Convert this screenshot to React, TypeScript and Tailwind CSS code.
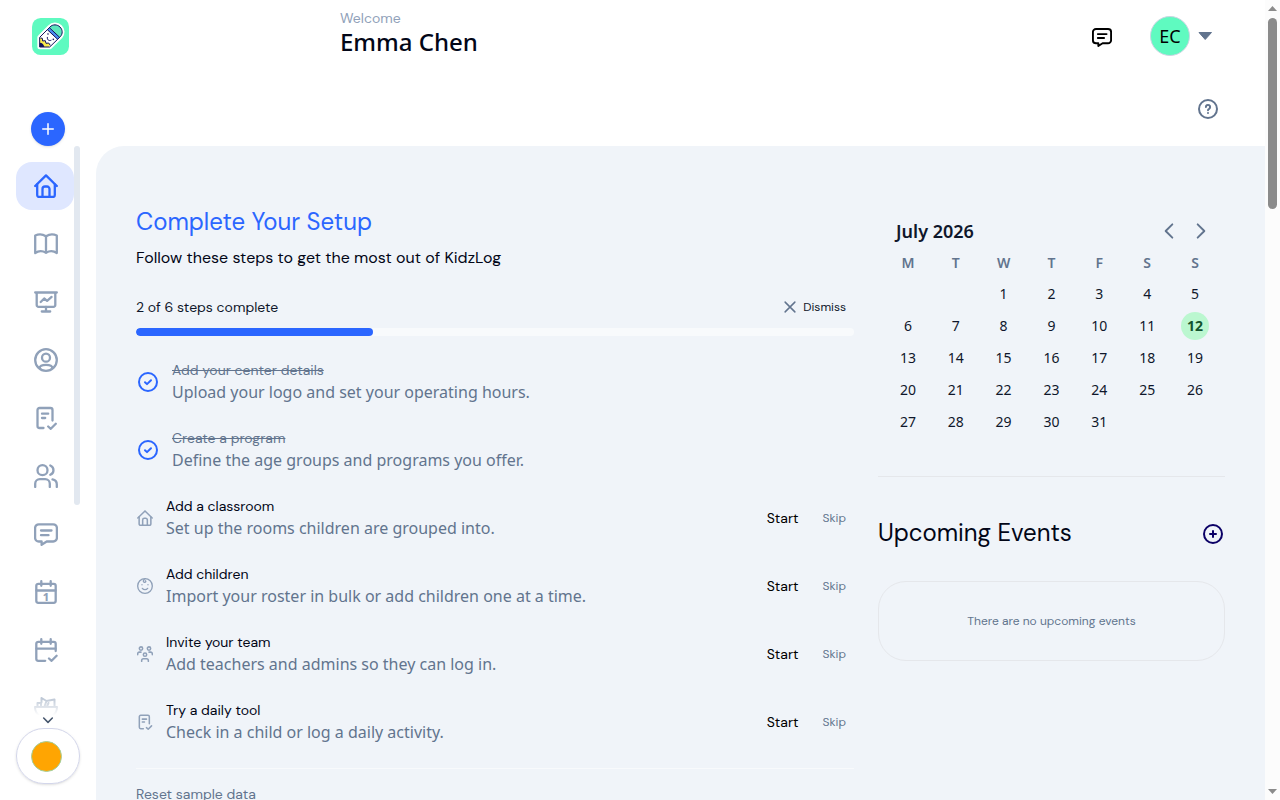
import React, { useState } from 'react';

interface IconProps {
    className?: string;
}

interface Step {
    title: string;
    description: string;
    done: boolean;
    icon: React.ComponentType<IconProps>;
}

const Svg = ({ className, children, strokeWidth = 2.3 }: { className?: string, children: React.ReactNode, strokeWidth?: number }) => (
    <svg viewBox="0 0 24 24" fill="none" stroke="currentColor" strokeWidth={strokeWidth}
        strokeLinecap="round" strokeLinejoin="round" className={className} aria-hidden="true">
        {children}
    </svg>
);

const HomeIcon = ({ className }: IconProps) => (
    <Svg className={className}>
        <path d="M1.2 12 12 1.4 22.8 12" />
        <path d="M3.2 10.500V21a2 2 0 0 0 2 2h13.600a2 2 0 0 0 2-2V10.500" />
        <path d="M8.500 23v-8a2.500 2.500 0 0 1 2.500-2.500h2a2.500 2.500 0 0 1 2.500 2.500V23" />
    </Svg>
);

const BookIcon = ({ className }: IconProps) => (
    <Svg className={className}>
        <path d="M1.2 3.500C4.500 2 8.500 2 12 4.200 15.500 2 19.500 2 22.800 3.500V21C19.500 18.700 15.500 18.700 12 20.700 8.500 18.700 4.500 18.700 1.200 21Z" />
        <path d="M12 4.200V20.500" />
    </Svg>
);

const BoardIcon = ({ className }: IconProps) => (
    <Svg className={className}>
        <path d="M1.200 2.500h21.600M2.700 2.500V15a1.800 1.800 0 0 0 1.800 1.800h15a1.800 1.800 0 0 0 1.800-1.800V2.500" />
        <path d="M12 17v4.500M7.800 21.500h8.400" />
        <path d="m6.700 12 3.500-3.500 2.900 2.400 4.500-4" />
    </Svg>
);

const ProfileIcon = ({ className }: IconProps) => (
    <Svg className={className}>
        <circle cx="12" cy="12" r="10.800" />
        <circle cx="12" cy="9.700" r="4" />
        <path d="M5.800 20c-.4-1.900 1.900-3.200 6.200-3.200s6.600 1.300 6.200 3.200" />
    </Svg>
);

const ChecklistIcon = ({ className }: IconProps) => (
    <Svg className={className}>
        <path d="M9.500 22H5.500a2 2 0 0 1-2-2V4a2 2 0 0 1 2-2h11a2 2 0 0 1 2 2v10.500" />
        <path d="M8 7.700h6.200M8 12h3.200" />
        <path d="m14.200 20.500 2.600 2.300 5-5" />
    </Svg>
);

const UsersIcon = ({ className }: IconProps) => (
    <Svg className={className}>
        <circle cx="8.500" cy="6.200" r="5" />
        <path d="M16.300 1.500a5 5 0 0 1 0 9.300" />
        <path d="M1.200 23v-3.200a4.600 4.600 0 0 1 4.600-4.600h5.400a4.600 4.600 0 0 1 4.600 4.600V23" />
        <path d="M18.500 15.400c2.600.5 4.300 2.400 4.300 5V23" />
    </Svg>
);

const ChatIcon = ({ className }: IconProps) => (
    <Svg className={className}>
        <path d="M4.800 2.300h14.400A3.700 3.700 0 0 1 22.900 6v9.800a3.700 3.700 0 0 1-3.700 3.700h-6.500L7.600 22.800v-3.300H4.800A3.700 3.700 0 0 1 1.100 15.800V6a3.700 3.700 0 0 1 3.700-3.700Z" />
        <path d="M7 8.500h10.500M7 13.200h7.500" />
    </Svg>
);

const CalendarDayIcon = ({ className }: IconProps) => (
    <Svg className={className}>
        <path d="M4.300 3.800h15.400a2 2 0 0 1 2 2v15a2 2 0 0 1-2 2H4.300a2 2 0 0 1-2-2v-15a2 2 0 0 1 2-2Z" />
        <path d="M2.500 10.500h19M7.300 1.200v4.600M16.700 1.200v4.600" />
        <text x="12" y="21" textAnchor="middle" fontSize="11" fontWeight="800" fill="currentColor" stroke="none">1</text>
    </Svg>
);

const CalendarCheckIcon = ({ className }: IconProps) => (
    <Svg className={className}>
        <path d="M11.200 22.800H4.300a2 2 0 0 1-2-2V5.800a2 2 0 0 1 2-2h15.400a2 2 0 0 1 2 2V13" />
        <path d="M2.500 10.700h19M7.300 1.200v4.600M16.700 1.200v4.600" />
        <path d="m15 20.500 2.600 2.300 5-5" />
    </Svg>
);

const MealIcon = ({ className }: IconProps) => (
    <Svg className={className} strokeWidth={2}>
        <path d="M1 11h22c0 4.500-2 7.500-5.500 9.500v2.500h-11v-2.500C3 18.500 1 15.500 1 11Z" />
        <path d="M3.500 10.500V7H7v3.500M7.500 6.500V2l5 3-2 5.500M12.500 5l8-1.500V11M13 10.500l1.500-3.500" />
    </Svg>
);

const ChildIcon = ({ className }: IconProps) => (
    <Svg className={className} strokeWidth={2}>
        <circle cx="12" cy="12" r="11" />
        <path d="M12.500 1c-3 1-4 4.500-1.500 5.500 1.800.6 2.800-1.300 1.500-2.300" />
        <path d="M7.500 10v.1M16.500 10v.1M8 15.500c2 2.500 6 2.500 8 0" />
    </Svg>
);

const TeamIcon = ({ className }: IconProps) => (
    <Svg className={className}>
        <circle cx="6" cy="3.800" r="2.500" />
        <circle cx="18" cy="3.800" r="2.500" />
        <circle cx="12" cy="13" r="2.500" />
        <path d="M1 13v-1.200a2.600 2.600 0 0 1 2.600-2.600H6M23 13v-1.200a2.600 2.600 0 0 0-2.600-2.600H18M7 23v-1.200a2.600 2.600 0 0 1 2.600-2.600h4.800a2.600 2.600 0 0 1 2.600 2.600V23" />
    </Svg>
);

const CheckCircleIcon = ({ className }: IconProps) => (
    <Svg className={className} strokeWidth={2}>
        <circle cx="12" cy="12" r="9" />
        <path d="m9 12.200 2 1.900 4-3.800" />
    </Svg>
);

const HelpIcon = ({ className }: IconProps) => (
    <Svg className={className} strokeWidth={2}>
        <circle cx="12" cy="12" r="9" />
        <path d="M9.900 10a2.100 2.100 0 1 1 3.200 1.800c-.7.400-1.100.8-1.100 1.500M12 16v.1" />
    </Svg>
);

const PlusCircleIcon = ({ className }: IconProps) => (
    <Svg className={className} strokeWidth={2}>
        <circle cx="12" cy="12" r="9" />
        <path d="M12 9v6M9 12h6" />
    </Svg>
);

const Logo = () => (
    <svg viewBox="0 0 111 111" className="size-[37px]" role="img" aria-label="KidzLog">
        <rect width="111" height="111" rx="26" fill="#5ffac0" />
        <path d="M23 87V58L54 27c8-9 22-8 30 0s9 20 1 29L53 87Z" fill="#fff" stroke="#fff" strokeWidth="14" strokeLinejoin="round" />
        <path d="M52 29l2-2c8-9 22-8 30 0s9 20 1 29l-2 2Z" fill="#5ce6bd" />
        <path d="M46 35l6-6 31 29-6 6Z" fill="#4a8cf0" />
        <path d="M23 87V60l8 1 1 8 8-1 2 8 8-1 5 7-5 5Z" fill="#fbe94b" />
        <path d="M23 87V74c8 0 13 6 14 13Z" fill="#12105a" />
        <path d="M23 87V58L54 27c8-9 22-8 30 0s9 20 1 29L53 87ZM46 35l31 29M52 29l31 29M25 60l6 1 1 8 8-1 2 8 8-1 5 7"
            fill="none" stroke="#12105a" strokeWidth="3" strokeLinejoin="round" />
        <path d="M46 58c-1 7 4 12 11 9" fill="none" stroke="#12105a" strokeWidth="3" strokeLinecap="round" />
        <circle cx="48" cy="48" r="2.500" fill="#12105a" />
        <circle cx="64" cy="64" r="2.500" fill="#12105a" />
    </svg>
);

const navItems = [
    { label: 'Home', icon: HomeIcon },
    { label: 'Programs', icon: BookIcon },
    { label: 'Classrooms', icon: BoardIcon },
    { label: 'Children', icon: ProfileIcon },
    { label: 'Activities', icon: ChecklistIcon },
    { label: 'Families', icon: UsersIcon },
    { label: 'Messages', icon: ChatIcon },
    { label: 'Calendar', icon: CalendarDayIcon },
    { label: 'Attendance', icon: CalendarCheckIcon },
    { label: 'Meals', icon: MealIcon },
];

const steps: Step[] = [
    { title: 'Add your center details', description: 'Upload your logo and set your operating hours.', done: true, icon: CheckCircleIcon },
    { title: 'Create a program', description: 'Define the age groups and programs you offer.', done: true, icon: CheckCircleIcon },
    { title: 'Add a classroom', description: 'Set up the rooms children are grouped into.', done: false, icon: HomeIcon },
    { title: 'Add children', description: 'Import your roster in bulk or add children one at a time.', done: false, icon: ChildIcon },
    { title: 'Invite your team', description: 'Add teachers and admins so they can log in.', done: false, icon: TeamIcon },
    { title: 'Try a daily tool', description: 'Check in a child or log a daily activity.', done: false, icon: ChecklistIcon },
];

const weekDays = ['M', 'T', 'W', 'T', 'F', 'S', 'S'];
const TODAY = 12;

// July 2026 starts on a Wednesday
const weeks = Array.from({ length: 5 }, (_, week) =>
    Array.from({ length: 7 }, (_, day) => {
        const date = week * 7 + day - 1;
        return date >= 1 && date <= 31 ? date : null;
    })
);

const Sidebar = () => {
    const [active, setActive] = useState('Home');

    return (
        <aside className="flex w-24 shrink-0 flex-col">
            <a href="#home" className="mt-[18px] ml-8 size-[37px]">
                <Logo />
            </a>
            <button aria-label="Create" className="mx-auto mt-[57px] flex size-[34px] shrink-0 items-center justify-center rounded-full bg-[#2b66ff] text-white shadow-sm">
                <Svg className="size-[18px]" strokeWidth={2}>
                    <path d="M12 5v14M5 12h14" />
                </Svg>
            </button>

            <div className="relative mx-4 flex min-h-0 flex-1 overflow-hidden">
                <nav className="flex flex-1 flex-col gap-2.5 pt-4">
                    {navItems.map(({ label, icon: Icon }) => (
                        <button
                            key={label}
                            aria-label={label}
                            onClick={() => setActive(label)}
                            className={`flex h-12 shrink-0 items-center justify-center rounded-2xl pl-0.5 ${
                                active === label ? 'bg-[#dfe7ff] text-[#2b66ff]' : 'text-slate-400'
                            }`}
                        >
                            <Icon className="size-6" />
                        </button>
                    ))}
                </nav>
                <div className="h-[359px] w-1.5 rounded-full bg-slate-200" />
                <div className="absolute inset-x-0 bottom-0 flex h-9 items-end justify-center bg-linear-to-t from-white from-35% to-white/20">
                    <Svg className="size-4 text-slate-600">
                        <path d="m5.500 9 6.500 6.500L18.500 9" />
                    </Svg>
                </div>
            </div>

            <button aria-label="Account status" className="mx-4 mb-4 flex h-14 shrink-0 items-center rounded-[28px] border border-[#d3d6ea] pl-3.5 shadow-sm">
                <span className="size-[31px] rounded-full border border-[#a5cf9a] bg-[#ffa502]" />
            </button>
        </aside>
    );
};

const Header = () => (
    <header className="flex h-[146px] shrink-0 flex-col pr-10">
        <div className="flex h-[72px] items-center justify-between pl-[244px]">
            <div className="pb-2">
                <p className="font-['DM_Sans','Inter',sans-serif] text-sm text-slate-400">Welcome</p>
                <h1 className="text-2xl leading-7 font-medium text-[#020617]">Emma Chen</h1>
            </div>
            <div className="flex items-center gap-[38px]">
                <button aria-label="Messages" className="pt-0.5 text-black">
                    <ChatIcon className="size-5" />
                </button>
                <button aria-label="Account menu" className="flex items-center gap-2 pr-3">
                    <span className="flex size-10 items-center justify-center rounded-full border border-slate-300 bg-[#5ffac0] text-lg text-black">EC</span>
                    <svg viewBox="0 0 15 8" className="h-2 w-[15px] text-slate-500" aria-hidden="true">
                        <path d="M1 .5h12.500L7.200 7.500Z" fill="currentColor" stroke="currentColor" strokeLinejoin="round" />
                    </svg>
                </button>
            </div>
        </div>
        <div className="flex flex-1 items-center justify-end">
            <button aria-label="Help" className="flex size-[34px] items-center justify-center text-slate-500">
                <HelpIcon className="size-6" />
            </button>
        </div>
    </header>
);

const SetupSteps = () => {
    const completed = steps.filter((step) => step.done).length;

    return (
        <section className="col-span-8 font-['DM_Sans','Inter',sans-serif]">
            <h2 className="text-2xl text-[#2b66ff]">Complete Your Setup</h2>
            <p className="mt-2 text-base text-[#020617]">Follow these steps to get the most out of KidzLog</p>

            <div className="mt-6 flex h-[26px] items-center justify-between pr-2">
                <span className="text-sm text-slate-900">{completed} of {steps.length} steps complete</span>
                <button className="flex items-center gap-1 text-xs text-slate-900">
                    <Svg className="size-[18px] text-slate-500" strokeWidth={2}>
                        <path d="m5.500 5.500 13 13M18.500 5.500l-13 13" />
                    </Svg>
                    Dismiss
                </button>
            </div>
            <div className="mt-2 h-2 overflow-hidden rounded-full bg-slate-50">
                <div className="h-2 rounded-full bg-[#2b66ff]" style={{ width: `${Math.round((completed / steps.length) * 100)}%` }} />
            </div>

            <ul className="mt-3">
                {steps.map(({ title, description, done, icon: Icon }) => (
                    <li key={title} className="flex items-center gap-3 py-3 pr-2">
                        <Icon className={done ? 'size-6 shrink-0 text-[#2b66ff]' : 'mx-px size-4 shrink-0 text-slate-400'} />
                        <div className="flex-1">
                            <p className={`text-sm ${done ? 'text-slate-500 line-through' : 'text-[#020617]'}`}>{title}</p>
                            <p className="font-['Noto_Sans',sans-serif] text-base text-slate-500">{description}</p>
                        </div>
                        {!done && (
                            <div className="flex items-center gap-6">
                                <button className="text-sm text-black">Start</button>
                                <button className="text-xs text-slate-500">Skip</button>
                            </div>
                        )}
                    </li>
                ))}
            </ul>

            <div className="mt-3 border-t border-slate-50 pt-[15px]">
                <button className="block text-sm text-slate-500">Reset sample data</button>
            </div>
        </section>
    );
};

const Calendar = () => (
    <div className="border-b border-gray-200 px-1.5 pt-2 pb-[38px]">
        <div className="flex h-[34px] items-center justify-between pr-0.5 pl-3">
            <h3 className="text-lg leading-8 font-semibold text-slate-900">July 2026</h3>
            <div className="flex text-slate-500">
                <button aria-label="Previous month" className="flex size-8 items-center justify-center">
                    <Svg className="size-5"><path d="m16 4-8 8 8 8" /></Svg>
                </button>
                <button aria-label="Next month" className="flex size-8 items-center justify-center">
                    <Svg className="size-5"><path d="m8 4 8 8-8 8" /></Svg>
                </button>
            </div>
        </div>
        <table className="w-full table-fixed text-center text-sm text-slate-900">
            <thead>
                <tr className="h-[30px] text-slate-500">
                    {weekDays.map((day, i) => (
                        <th key={i} scope="col" className="p-0 font-semibold">{day}</th>
                    ))}
                </tr>
            </thead>
            <tbody>
                {weeks.map((week, i) => (
                    <tr key={i} className="h-8">
                        {week.map((date, j) => (
                            <td key={j} className="p-0">
                                {date && (
                                    <span className={`mx-auto flex size-7 items-center justify-center rounded-full ${
                                        date === TODAY ? 'bg-[#bbf7d0] font-bold text-[#14532d]' : ''
                                    }`}>
                                        {date}
                                    </span>
                                )}
                            </td>
                        ))}
                    </tr>
                ))}
            </tbody>
        </table>
    </div>
);

const UpcomingEvents = () => (
    <div className="mt-10 font-['DM_Sans','Inter',sans-serif]">
        <div className="flex items-center justify-between">
            <h2 className="text-2xl text-[#020617]">Upcoming Events</h2>
            <button aria-label="Add event" className="pt-0.5 text-[#0b0066]">
                <PlusCircleIcon className="size-6" />
            </button>
        </div>
        <div className="mt-8 flex h-20 items-center justify-center rounded-[28px] border border-gray-200">
            <p className="text-xs text-slate-500">There are no upcoming events</p>
        </div>
    </div>
);

const PageScrollbar = () => (
    <div className="flex w-[15px] shrink-0 flex-col items-center justify-between bg-[#fcfcfc] py-1.5" aria-hidden="true">
        <div className="flex flex-col items-center gap-[7px]">
            <svg viewBox="0 0 9 5" className="h-[5px] w-[9px]"><path d="M4.500 0 9 5H0Z" fill="#8b8b8b" /></svg>
            <div className="h-[191px] w-[9px] rounded-full bg-[#8b8b8b]" />
        </div>
        <svg viewBox="0 0 9 5" className="h-[5px] w-[9px]"><path d="M0 0h9L4.500 5Z" fill="#8b8b8b" /></svg>
    </div>
);

const App = () => {
    return (
        <div className="flex h-screen overflow-hidden bg-white font-['Noto_Sans',sans-serif]">
            <Sidebar />
            <div className="flex min-w-0 flex-1 flex-col">
                <Header />
                <main className="grid min-h-0 flex-1 grid-cols-12 content-start gap-6 overflow-hidden rounded-tl-[28px] bg-[#f0f4f9] px-10 pt-[60px]">
                    <SetupSteps />
                    <aside className="col-span-4">
                        <Calendar />
                        <UpcomingEvents />
                    </aside>
                </main>
            </div>
            <PageScrollbar />
        </div>
    );
};

export default App;
